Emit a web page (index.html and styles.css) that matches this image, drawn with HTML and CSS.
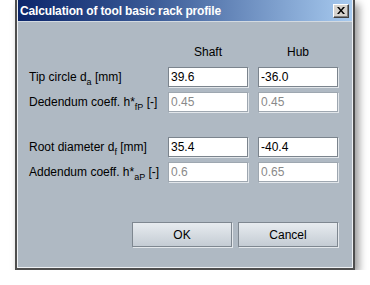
FILE: index.html
```html
<!DOCTYPE html>
<html lang="en">
<head>
<meta charset="UTF-8" />
<title>Calculation of tool basic rack profile</title>
<link rel="stylesheet" href="styles.css">
</head>
<body>
<div class="dialog">
  <div class="frame">
    <div class="titlebar">
      <span class="title">Calculation of tool basic rack profile</span>
      <button class="close" type="button" aria-label="Close">
        <svg width="8" height="7" viewBox="0 0 8 7">
          <path d="M0 0h2l2 2.5L6 0h2L5 3.5 8 7H6L4 4.5 2 7H0l3-3.5z" fill="#000"/>
        </svg>
      </button>
    </div>
    <div class="content">
      <div class="grid">
        <span></span>
        <span class="colhead">Shaft</span>
        <span class="colhead">Hub</span>

        <label for="daShaft">Tip circle d<sub>a</sub> [mm]</label>
        <input type="text" id="daShaft" value="39.6" />
        <input type="text" id="daHub" value="-36.0" />

        <label>Dedendum coeff. h*<sub>fP</sub> [-]</label>
        <input type="text" value="0.45" disabled />
        <input type="text" value="0.45" disabled />

        <span class="spacer"></span><span></span><span></span>

        <label for="dfShaft">Root diameter d<sub>f</sub> [mm]</label>
        <input type="text" id="dfShaft" value="35.4" />
        <input type="text" id="dfHub" value="-40.4" />

        <label>Addendum coeff. h*<sub>aP</sub> [-]</label>
        <input type="text" value="0.6" disabled />
        <input type="text" value="0.65" disabled />
      </div>
      <div class="actions">
        <button type="button">OK</button>
        <button type="button">Cancel</button>
      </div>
    </div>
  </div>
</div>
</body>
</html>
```

FILE: styles.css
```css
body {
  margin: 0;
  background: #ffffff;
  font-family: "Liberation Sans", Arial, sans-serif;
  font-size: 12px;
  color: #000;
}
.dialog {
  margin-left: 15px;
  width: 340px;
  height: 270px;
  box-sizing: border-box;
  border: 2px solid #4e4e4e;
  border-top: none;
  box-shadow: 4px 4px 8px rgba(0, 0, 0, 0.4);
}
.frame {
  height: 100%;
  box-sizing: border-box;
  border: 1px solid #edf0f3;
  border-top: none;
  background: #afb9c3;
  display: flex;
  flex-direction: column;
}
.titlebar {
  height: 21px;
  display: flex;
  align-items: center;
  justify-content: space-between;
  padding: 0 3px 0 1px;
  background: linear-gradient(to right, #0c266b 0%, #3a5a96 40%, #a7caef 100%);
  border-bottom: 1px solid #d3dae1;
}
.title {
  color: #fff;
  font-weight: bold;
  font-size: 12px;
  letter-spacing: -0.15px;
  padding-left: 1px;
}
.close {
  width: 16px;
  height: 14px;
  padding: 0;
  margin: 0;
  display: flex;
  align-items: center;
  justify-content: center;
  background: #d6d3ce;
  border: 1px solid;
  border-color: #fff #404040 #404040 #fff;
  box-shadow: inset -1px -1px 0 #808080;
}
.content {
  padding: 23px 0 0 11px;
}
.grid {
  display: grid;
  grid-template-columns: 129px 80px 80px;
  grid-template-rows: 17px 20px 20px 15px 20px 20px;
  column-gap: 10px;
  row-gap: 5px;
  width: 309px;
}
.colhead {
  text-align: center;
  line-height: 14px;
  align-self: start;
}
label {
  line-height: 20px;
  white-space: nowrap;
}
sub {
  font-size: 9px;
  line-height: 0;
  vertical-align: -4px;
}
input {
  width: 80px;
  height: 20px;
  box-sizing: border-box;
  margin: 0;
  padding: 0 2px;
  font-family: "Liberation Sans", Arial, sans-serif;
  font-size: 12px;
  color: #000;
  background: #fff;
  border: 1px solid #7b848d;
  box-shadow: 1px 1px 0 #e2e6ea;
  outline: none;
}
input:disabled {
  color: #8a8a8a;
  border-color: #9ea7b0;
}
.actions {
  width: 309px;
  margin-top: 40px;
  display: flex;
  justify-content: flex-end;
  gap: 6px;
}
.actions button {
  width: 100px;
  height: 25px;
  font-family: "Liberation Sans", Arial, sans-serif;
  font-size: 12px;
  color: #000;
  background: linear-gradient(to bottom, #e7ebef, #c4ccd4);
  border: 1px solid #7e8790;
  box-shadow: 1px 1px 0 #e4e8ec;
}
```
